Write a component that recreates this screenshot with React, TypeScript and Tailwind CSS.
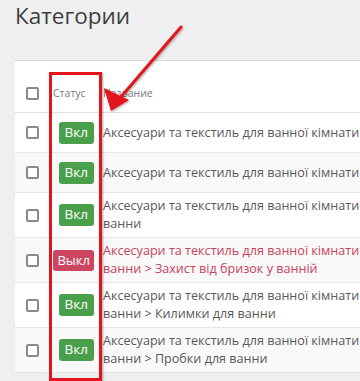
import React from 'react';

type Row = {
  on: boolean;
  lines: string[];
};

const first = 'Аксесуари та текстиль для ванної кімнати';

const rows: Row[] = [
  { on: true, lines: [first] },
  { on: true, lines: [first] },
  { on: true, lines: [first, 'ванни'] },
  { on: false, lines: [first, 'ванни > Захист від бризок у ванній'] },
  { on: true, lines: [first, 'ванни > Килимки для ванни'] },
  { on: true, lines: [first, 'ванни > Пробки для ванни'] },
];

function Checkbox() {
  return <span className="block shrink-0 w-[13px] h-[13px] rounded-[2px] border-2 border-[#8a8a8a] bg-white" />;
}

function Badge({ on }: { on: boolean }) {
  if (on) {
    return (
      <span className="inline-flex items-center h-[22px] px-[6px] rounded-[3px] bg-[#4a9f4a] text-white text-[13.5px] leading-none">
        Вкл
      </span>
    );
  }
  return (
    <span className="inline-flex items-center h-[21px] px-[4px] rounded-[3px] bg-[#cc4661] text-white text-[13px] leading-none">
      Выкл
    </span>
  );
}

export default function App() {
  return (
    <div
      className="relative w-[360px] h-[381px] overflow-hidden bg-[#efefef]"
      style={{ fontFamily: '"Open Sans", "Noto Sans", sans-serif' }}
    >
      <h1 className="pl-[15px] text-[22.5px] leading-[32px] font-normal text-[#3d3d3d]">Категории</h1>

      <div className="ml-[15px] mt-[28px] w-[420px] bg-white border-t border-[#dcdcdc]">
        {/* header */}
        <div className="flex items-end h-[52px] pb-[12px] border-b border-[#dedede]">
          <div className="w-[34px] shrink-0 flex justify-center pl-[1px]">
            <Checkbox />
          </div>
          <div className="w-[54px] shrink-0 pl-[4px] text-[10.5px] leading-[13px] text-[#7a7a7a]">Статус</div>
          <div className="flex-1 text-[10.5px] leading-[13px] text-[#7a7a7a]">Название</div>
        </div>

        {rows.map((row, i) => (
          <div
            key={i}
            className={
              'flex items-center border-b border-[#e6e6e6] ' +
              (row.lines.length > 1 ? 'h-[45px] ' : 'h-[40px] ') +
              (i % 2 === 1 ? 'bg-[#f9f9f9]' : 'bg-white')
            }
          >
            <div className="w-[34px] shrink-0 flex justify-center pl-[1px]">
              <Checkbox />
            </div>
            <div className="w-[54px] shrink-0 flex justify-end pr-[9px]">
              <Badge on={row.on} />
            </div>
            <div className={'flex-1 text-[12.6px] leading-[18px] ' + (row.on ? 'text-[#595959]' : 'text-[#c8425e]')}>
              {row.lines.map((l, j) => (
                <span key={j} className="block whitespace-nowrap">
                  {l}
                </span>
              ))}
            </div>
          </div>
        ))}
      </div>

      {/* annotation */}
      <div className="absolute left-[49px] top-[72px] w-[53px] h-[309px] border-[3px] border-[#e3141b] shadow-[1px_1px_2px_rgba(0,0,0,0.35)]" />
      <svg className="absolute left-0 top-0" width="360" height="381" viewBox="0 0 360 381">
        <defs>
          <filter id="sh" x="-20%" y="-20%" width="140%" height="140%">
            <feDropShadow dx="1" dy="1" stdDeviation="1" floodColor="#000" floodOpacity="0.35" />
          </filter>
        </defs>
        <g filter="url(#sh)">
          <line x1="181" y1="27" x2="120" y2="98" stroke="#e3141b" strokeWidth="3" strokeLinecap="round" />
          <polygon points="111,111 104,88 129,100" fill="#e3141b" />
        </g>
      </svg>
    </div>
  );
}
